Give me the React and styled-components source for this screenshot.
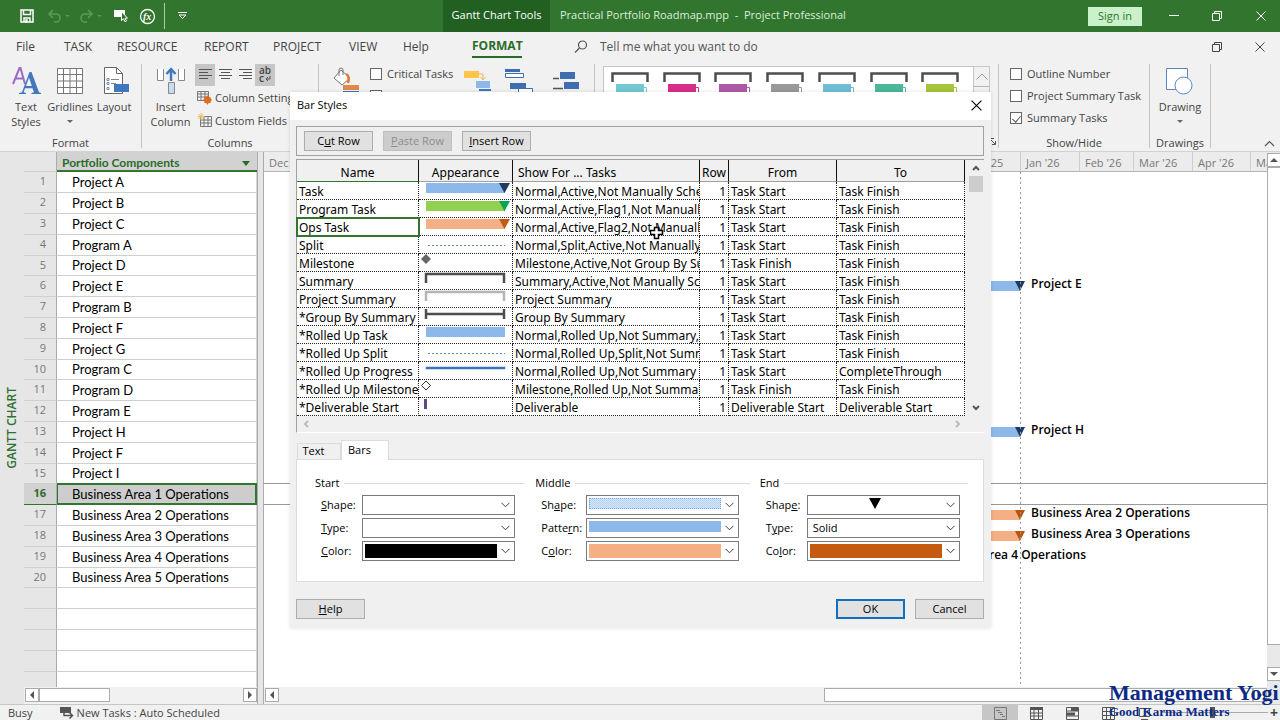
import { useState } from 'react'
import styled, { createGlobalStyle } from 'styled-components'

const UI_FONT = '"Open Sans", "Noto Sans", sans-serif'

const GlobalStyle = createGlobalStyle`
  * {
    box-sizing: border-box;
  }
  body {
    margin: 0;
    font-family: ${UI_FONT};
    font-size: 11px;
    line-height: 16px;
    color: #444;
    background: #f1f1f1;
  }
  button,
  input,
  select {
    font: inherit;
    color: inherit;
    margin: 0;
  }
`

const Page = styled.div`
  position: relative;
  display: flex;
  flex-direction: column;
  height: 100vh;
  overflow: hidden;
`

const Spacer = styled.div`
  flex: 1;
`

const IconButton = styled.button`
  display: flex;
  align-items: center;
  justify-content: center;
  width: ${(props) => props.$width || 34}px;
  height: 28px;
  padding: 0;
  border: 0;
  background: none;
`

/* title bar */
const TitleBar = styled.header`
  display: flex;
  align-items: stretch;
  height: 32px;
  flex: none;
  background: #31752f;
  color: #fff;
`

const QuickAccess = styled.div`
  display: flex;
  align-items: center;
  width: 443px;
  padding-left: 10px;
`

const QuickDivider = styled.div`
  width: 1px;
  height: 26px;
  margin-left: 4px;
  background: #a9cfa8;
`

const ContextTab = styled.div`
  display: flex;
  align-items: center;
  justify-content: center;
  width: 107px;
  height: 32px;
  padding-bottom: 2px;
  background: #226022;
`

const WindowTitle = styled.div`
  display: flex;
  align-items: center;
  padding: 0 0 2px 10px;
  white-space: pre;
  color: #d9f0d8;
`

const SignIn = styled.button`
  align-self: center;
  width: 54px;
  height: 19px;
  margin-right: 14px;
  padding: 0;
  border: 0;
  background: #cbf1cb;
  color: #31752f;
  line-height: 18px;
`

const WindowControls = styled.div`
  display: flex;
  align-items: center;
`

/* menu tabs */
const MenuBar = styled.nav`
  display: flex;
  align-items: center;
  flex: none;
  height: 30px;
  padding-left: 16px;
  font-size: 12px;
`

const MenuTab = styled.a`
  flex: none;
  width: ${(props) => props.$width}px;
  color: #444;
  text-decoration: none;
  white-space: nowrap;
`

const ActiveTab = styled(MenuTab)`
  height: 20px;
  margin: 2px 52px 0 0;
  border-bottom: 2px solid #2b6b29;
  color: #2b6b29;
  font-weight: 700;
  text-align: center;
`

const Tell = styled.label`
  display: flex;
  align-items: center;
  gap: 12px;
  width: 300px;
`

const TellInput = styled.input`
  flex: 1;
  border: 0;
  padding: 0;
  background: none;
  outline: none;
  &::placeholder {
    color: #555;
    opacity: 1;
  }
`

/* ribbon */
const Ribbon = styled.div`
  display: flex;
  flex: none;
  height: 90px;
  padding: 2px 0 3px;
  border-bottom: 1px solid #d2d2d2;
`

const Group = styled.section`
  display: flex;
  flex-direction: column;
  flex: none;
  width: ${(props) => props.$width}px;
  border-right: 1px solid #c3c3c3;
`

const GroupBody = styled.div`
  display: flex;
  align-items: flex-start;
  flex: 1;
  min-height: 0;
  padding-left: ${(props) => props.$pad || 0}px;
`

const GroupLabel = styled.div`
  text-align: center;
  height: 10px;
  line-height: 10px;
`

const Launcher = styled.div`
  display: flex;
  justify-content: flex-end;
  height: 10px;
  padding-right: 2px;
`

const BigButton = styled.button`
  display: flex;
  flex-direction: column;
  align-items: center;
  flex: none;
  width: ${(props) => props.$width || 44}px;
  padding: 1px 0 0;
  border: 0;
  background: none;
  line-height: 15px;
  white-space: nowrap;
`

const BigIcon = styled.svg`
  display: block;
  width: 32px;
  height: 32px;
  margin-bottom: 2px;
`

const Caret = styled.span`
  width: 0;
  height: 0;
  margin-top: 6px;
  border: 3px solid transparent;
  border-top-color: #666;
  border-bottom: 0;
`

const ColumnTools = styled.div`
  display: flex;
  flex-direction: column;
`

const AlignRow = styled.div`
  display: flex;
  height: 22px;
`

const AlignButton = styled.button`
  display: flex;
  align-items: center;
  justify-content: center;
  width: ${(props) => props.$width || 20}px;
  height: 22px;
  padding: 0;
  border: 0;
  background: ${(props) => (props.$on ? '#c6c6c6' : 'none')};
`

const SmallButton = styled.button`
  display: flex;
  align-items: center;
  gap: 3px;
  height: 23px;
  padding: 0 2px;
  border: 0;
  background: none;
  white-space: nowrap;
`

const CheckList = styled.div`
  display: flex;
  flex-direction: column;
  gap: 6px;
  padding-top: 2px;
`

const CheckLabel = styled.label`
  display: flex;
  align-items: center;
  gap: 5px;
  height: 16px;
  white-space: nowrap;
`

const CheckInput = styled.input`
  appearance: none;
  display: grid;
  place-content: center;
  width: 12px;
  height: 12px;
  border: 1px solid #666;
  background: #fff;
  &:checked::before {
    content: '';
    width: 4px;
    height: 7px;
    border: solid #555;
    border-width: 0 1px 1px 0;
    transform: rotate(40deg);
  }
`

const Gallery = styled.div`
  display: flex;
  width: 387px;
  height: 62px;
  margin: 2px 0 0 8px;
  border: 1px solid #c6c6c6;
  background: #fff;
`

const GalleryItems = styled.div`
  display: flex;
  flex: 1;
  padding-left: 7px;
`

const GalleryItem = styled.button`
  display: flex;
  align-items: flex-start;
  flex: 1;
  padding: 5px 0 0;
  border: 0;
  background: none;
`

const GalleryScroll = styled.div`
  width: 16px;
  border-left: 1px solid #c6c6c6;
  background: #f1f1f1;
`

const GalleryArrow = styled.button`
  display: flex;
  align-items: center;
  justify-content: center;
  width: 100%;
  height: 20px;
  padding: 0;
  border: 0;
  border-bottom: 1px solid #b5b5b5;
  background: none;
`

const RibbonEnd = styled.div`
  display: flex;
  flex: 1;
  align-items: flex-end;
  justify-content: flex-end;
  padding-right: 5px;
`

/* main area */
const Main = styled.main`
  display: flex;
  flex: 1;
  min-height: 0;
  background: #fff;
`

const ViewStrip = styled.div`
  display: flex;
  align-items: center;
  justify-content: center;
  width: 24px;
  flex: none;
  background: #e6e6e6;
`

const ViewName = styled.span`
  writing-mode: vertical-rl;
  transform: rotate(180deg);
  color: #2f7030;
  font-weight: 600;
  font-size: 12px;
`

const SheetPane = styled.div`
  display: flex;
  flex-direction: column;
  flex: none;
  width: 234px;
  border-right: 1px solid #ababab;
`

const SheetScroll = styled.div`
  flex: 1;
  min-height: 0;
  overflow: hidden;
`

const Sheet = styled.table`
  width: 100%;
  border-collapse: separate;
  border-spacing: 0;
  table-layout: fixed;
  font-family: Lato, sans-serif;
  font-size: 13px;
  color: #000;
`

const SheetCorner = styled.th`
  width: 33px;
  height: 20px;
  padding: 0;
  background: #e6e6e6;
  border-right: 1px solid #ababab;
  border-bottom: 1px solid #cfcfcf;
`

const SheetHeading = styled.th`
  padding: 0 7px 0 5px;
  border-bottom: 2px solid #31752f;
  background: #d2d2d2;
  color: #2b6b29;
  font-size: 12px;
  text-align: left;
`

const HeadingRow = styled.div`
  display: flex;
  align-items: center;
  justify-content: space-between;
  padding-top: 4px;
  line-height: 14px;
`

const FilterArrow = styled.span`
  border: 4px solid transparent;
  border-top: 5px solid #2b6b29;
  border-bottom: 0;
`

const SheetRow = styled.tr`
  height: 21px;
  &:nth-child(5n) {
    height: 20px;
  }
`

const RowNumber = styled.th`
  padding: 0 10px 2px 0;
  border-right: 1px solid #ababab;
  border-bottom: 1px solid ${(props) => (props.$on ? '#31752f' : '#d0d0d0')};
  background: ${(props) => (props.$on ? '#d2d2d2' : '#e6e6e6')};
  color: ${(props) => (props.$on ? '#2b6b29' : '#777')};
  font-family: ${UI_FONT};
  font-size: 11px;
  font-weight: ${(props) => (props.$on ? 700 : 400)};
  line-height: 14px;
  text-align: right;
`

const TaskName = styled.td`
  padding: 0 0 1px 15px;
  border-bottom: 1px solid ${(props) => (props.$on ? '#31752f' : '#cfcfcf')};
  border-right: 1px solid ${(props) => (props.$on ? '#31752f' : '#d6d6d6')};
  background: ${(props) => (props.$on ? '#cdcdcd' : '#fff')};
  box-shadow: ${(props) => (props.$on ? '0 -1px 0 #31752f, inset 0 0 0 1px #31752f' : 'none')};
  line-height: 16px;
  white-space: nowrap;
`

const HScroll = styled.div`
  display: flex;
  align-items: flex-start;
  flex: none;
  height: 17px;
  padding: 1px 0 0 1px;
  background: #f1f1f1;
`

const ScrollArrow = styled.button`
  display: flex;
  align-items: center;
  justify-content: center;
  flex: none;
  width: 14px;
  height: 14px;
  padding: 0;
  border: 1px solid #ababab;
  background: #fff;
`

const ScrollThumb = styled.div`
  width: ${(props) => props.$width}px;
  height: 14px;
  border: 1px solid #ababab;
  background: #fff;
`

const Splitter = styled.div`
  flex: none;
  width: 6px;
  background: #e6e6e6;
  border-right: 1px solid #ababab;
`

const ChartPane = styled.div`
  display: flex;
  flex-direction: column;
  flex: 1;
  min-width: 0;
`

const Timescale = styled.div`
  display: flex;
  flex: none;
  height: 20px;
  overflow: hidden;
  border-bottom: 1px solid #b5b5b5;
  background: #ececec;
  color: #777;
`

const Month = styled.div`
  flex: none;
  width: ${(props) => props.$width}px;
  height: 19px;
  padding: 3px 0 0 5px;
  border-right: 1px solid #cfcfcf;
  white-space: nowrap;
`

const ChartArea = styled.div`
  position: relative;
  flex: 1;
  min-height: 0;
  overflow: hidden;
`

const TodayLine = styled.div`
  position: absolute;
  top: 0;
  bottom: 0;
  left: 756px;
  width: 1px;
  background: repeating-linear-gradient(#999 0 2px, transparent 2px 5px);
`

const ChartRow = styled.div`
  display: flex;
  align-items: center;
  height: 21px;
  padding-bottom: 4px;
  border-bottom: 1px solid ${(props) => (props.$on ? '#999' : 'transparent')};
  box-shadow: ${(props) => (props.$on ? '0 -1px 0 #999' : 'none')};
  color: #000;
  font-size: 12px;
  font-weight: 600;
  white-space: nowrap;
  &:nth-child(5n) {
    height: 20px;
  }
`

const GanttBar = styled.div`
  width: 100px;
  height: 10px;
  margin-top: 4px;
  background: ${(props) => props.color};
`

const GanttEnd = styled.svg`
  width: 10px;
  height: 10px;
  margin: 4px 6px 0 -5px;
`

const VScroll = styled.div`
  display: flex;
  flex-direction: column;
  flex: none;
  width: 13px;
  padding: 1px 0 23px;
  background: #e9e9e9;
`

const VThumb = styled.div`
  flex: 1;
  margin-bottom: 22px;
  border: 1px solid #ababab;
  border-right: 0;
  background: #fff;
`

/* status bar */
const StatusBar = styled.footer`
  display: flex;
  align-items: center;
  flex: none;
  height: 16px;
  padding-left: 8px;
  border-top: 1px solid #c6c6c6;
`

const StatusMode = styled.div`
  display: flex;
  align-items: center;
  gap: 3px;
  margin-left: 27px;
`

const ViewButton = styled.button`
  display: flex;
  align-items: center;
  justify-content: center;
  width: 36px;
  height: 15px;
  padding: 2px 0 0;
  border: 0;
  background: ${(props) => (props.$on ? '#c6c6c6' : 'none')};
`

const ZoomSlider = styled.input`
  appearance: none;
  width: 106px;
  height: 12px;
  background: linear-gradient(#aaa, #aaa) center / 100% 1px no-repeat;
  &::-webkit-slider-thumb {
    appearance: none;
    width: 5px;
    height: 11px;
    background: #555;
  }
`

const ZoomSign = styled.button`
  width: 12px;
  padding: 0;
  border: 0;
  background: none;
  font-size: 14px;
  line-height: 14px;
  font-weight: 700;
`

const Watermark = styled.div`
  position: absolute;
  right: 0;
  bottom: 0;
  z-index: 3;
  width: 171px;
  color: #0b2a86;
  font-family: 'Liberation Serif', serif;
  font-weight: 700;
  white-space: nowrap;
`

const WatermarkName = styled.div`
  font-size: 22px;
  line-height: 22px;
`

const WatermarkLine = styled.div`
  font-size: 13px;
  line-height: 16px;
`

/* dialog */
const DialogLayer = styled.div`
  position: absolute;
  inset: 0;
  z-index: 2;
  display: flex;
  align-items: flex-start;
  justify-content: center;
  padding: 92px 0 0 1px;
`

const Dialog = styled.div`
  position: relative;
  width: 701px;
  background: #f0f0f0;
  box-shadow: 0 0 4px rgba(0, 0, 0, 0.12);
  color: #000;
`

const DialogTitle = styled.div`
  display: flex;
  align-items: center;
  justify-content: space-between;
  height: 28px;
  padding: 0 0 2px 7px;
  background: #fff;
`

const DialogBody = styled.div`
  padding: 6px 7px 9px 6px;
`

const RowTools = styled.div`
  display: flex;
  align-items: center;
  gap: 10px;
  height: 30px;
  padding-left: 7px;
  border: 1px solid #a0a0a0;
`

const DialogButton = styled.button`
  width: 69px;
  height: 20px;
  padding: 0;
  border: ${(props) => (props.$primary ? '2px solid #0f6fbd' : '1px solid #adadad')};
  background: #e1e1e1;
  line-height: 16px;
  white-space: nowrap;
  &:disabled {
    border-color: #bfbfbf;
    background: #ccc;
    color: #8c8c8c;
  }
`

const StylesFrame = styled.div`
  display: grid;
  grid-template-columns: 1fr 19px;
  margin-top: 3px;
  border-top: 1px solid #a0a0a0;
  border-left: 1px solid #a0a0a0;
  border-bottom: 1px solid #fff;
`

const StylesTable = styled.table`
  width: 668px;
  border-collapse: separate;
  border-spacing: 0;
  table-layout: fixed;
  background: #fff;
  font-family: 'Noto Sans', sans-serif;
  font-size: 12px;
`

const StylesHead = styled.th`
  width: ${(props) => props.$width}px;
  height: 22px;
  padding: 5px 0 0;
  border-right: 1px solid #111;
  border-bottom: 1px solid ${(props) => (props.$on ? '#31752f' : '#a0a0a0')};
  background: #f0f0f0;
  font-weight: 400;
  line-height: 16px;
  text-align: ${(props) => props.$align || 'center'};
  text-indent: ${(props) => (props.$align ? 5 : 0)}px;
  white-space: nowrap;
`

const StylesCell = styled.td`
  height: 18px;
  padding: 2px 0 0 2px;
  overflow: hidden;
  border-right: 1px dotted #222;
  border-bottom: 1px dotted #222;
  outline: ${(props) => (props.$on ? '2px solid #31752f' : 'none')};
  outline-offset: -1px;
  line-height: 15px;
  white-space: nowrap;
`

const RowCell = styled(StylesCell)`
  padding-right: 2px;
  text-align: right;
`

const AppearanceCell = styled(StylesCell)`
  padding: 0;
`

const Drawing = styled.svg`
  display: block;
`

const DialogVScroll = styled.div`
  display: flex;
  flex-direction: column;
  justify-content: space-between;
  align-items: center;
  padding-left: 2px;
`

const DialogVThumb = styled.div`
  width: 14px;
  height: 16px;
  background: #cdcdcd;
`

const DialogHScroll = styled.div`
  display: flex;
  align-items: center;
  justify-content: space-between;
  height: 16px;
  padding: 0 0 0 2px;
`

const PlainArrow = styled.button`
  display: flex;
  align-items: center;
  justify-content: center;
  width: 14px;
  height: 16px;
  padding: 0;
  border: 0;
  background: none;
`

const TabList = styled.div`
  display: flex;
  align-items: flex-end;
  margin-top: 7px;
  height: 19px;
  padding-left: 1px;
`

const DialogTab = styled.button`
  width: ${(props) => (props.$on ? 48 : 44)}px;
  height: ${(props) => (props.$on ? 20 : 16)}px;
  margin-bottom: ${(props) => (props.$on ? -1 : 0)}px;
  padding: 0 15px 2px 4px;
  border: 1px solid #dcdcdc;
  border-bottom: 0;
  background: ${(props) => (props.$on ? '#fff' : '#f0f0f0')};
  line-height: 14px;
`

const TabPanel = styled.div`
  display: grid;
  grid-template-columns: 210fr 214fr 208fr;
  gap: 10px;
  height: 123px;
  padding: 15px 15px 0 18px;
  border: 1px solid #dcdcdc;
  background: #fff;
`

const BarPart = styled.fieldset`
  min-width: 0;
  margin: 0;
  padding: 0;
  border: 0;
`

const PartTitle = styled.div`
  display: flex;
  align-items: center;
  gap: 5px;
  height: 16px;
  margin-bottom: 4px;
  &::after {
    content: '';
    flex: 1;
    height: 1px;
    background: #dcdcdc;
  }
`

const Field = styled.div`
  display: grid;
  grid-template-columns: ${(props) => props.$label}px 153px;
  align-items: center;
  height: 20px;
  margin-bottom: 3px;
  padding-left: 6px;
`

const Combo = styled.div`
  display: grid;
  height: 20px;
  border: 1px solid #7a7a7a;
  background: #fff;
  & > * {
    grid-area: 1 / 1;
  }
`

const ComboSelect = styled.select`
  appearance: none;
  width: 100%;
  height: 18px;
  padding: 0 5px;
  border: 0;
  background: none;
  line-height: 16px;
`

const Swatch = styled.div`
  width: 132px;
  height: ${(props) => (props.$thin ? 11 : 14)}px;
  margin: 2px;
  background: ${(props) => props.color};
`

const DottedSwatch = styled(Swatch)`
  border: 1px dotted #6fa3dc;
  background: repeating-conic-gradient(#b4d3f5 0 25%, #d3e6fa 0 50%) 0 0 / 2px 2px;
`

const ComboArrow = styled.svg`
  justify-self: end;
  align-self: center;
  width: 9px;
  height: 6px;
  margin-right: 4px;
  pointer-events: none;
`

const ShapeMark = styled.svg`
  justify-self: center;
  width: 12px;
  height: 12px;
  margin: 1px 16px 0 0;
`

const DialogFooter = styled.div`
  display: flex;
  gap: 10px;
  margin-top: 17px;
`

const CellCursor = styled.svg`
  position: absolute;
  left: 360px;
  top: 134px;
  width: 14px;
  height: 14px;
`

const TASKS = [
  'Project A',
  'Project B',
  'Project C',
  'Program A',
  'Project D',
  'Project E',
  'Program B',
  'Project F',
  'Project G',
  'Program C',
  'Program D',
  'Program E',
  'Project H',
  'Project F',
  'Project I',
  'Business Area 1 Operations',
  'Business Area 2 Operations',
  'Business Area 3 Operations',
  'Business Area 4 Operations',
  'Business Area 5 Operations',
]

const SHEET_ROWS = Array.from({ length: 25 }, (_, i) => TASKS[i] || '')
const SELECTED = 16

// bar end, in pixels from the left edge of the chart
const BARS = {
  6: { end: 756, color: '#8cb9ea', mark: '#1f3864' },
  13: { end: 756, color: '#8cb9ea', mark: '#1f3864' },
  17: { end: 756, color: '#f4b084', mark: '#b85410' },
  18: { end: 756, color: '#f4b084', mark: '#b85410' },
  19: { end: 652, color: '#f4b084', mark: '#b85410' },
}

const MONTHS = [
  ["Dec '24", 58],
  ["Jan '25", 59],
  ["Feb '25", 54],
  ["Mar '25", 59],
  ["Apr '25", 58],
  ["May '25", 59],
  ["Jun '25", 58],
  ["Jul '25", 59],
  ["Aug '25", 59],
  ["Sep '25", 58],
  ["Oct '25", 59],
  ["Nov '25", 57],
  ["Dec '25", 60],
  ["Jan '26", 59],
  ["Feb '26", 54],
  ["Mar '26", 59],
  ["Apr '26", 58],
  ["May '26", 59],
]

const STYLES = [
  ['Task', 'task', 'Normal,Active,Not Manually Sche', 'Task Start', 'Task Finish'],
  ['Program Task', 'program', 'Normal,Active,Flag1,Not Manually', 'Task Start', 'Task Finish'],
  ['Ops Task', 'ops', 'Normal,Active,Flag2,Not Manually', 'Task Start', 'Task Finish'],
  ['Split', 'split', 'Normal,Split,Active,Not Manually', 'Task Start', 'Task Finish'],
  ['Milestone', 'milestone', 'Milestone,Active,Not Group By Su', 'Task Finish', 'Task Finish'],
  ['Summary', 'summary', 'Summary,Active,Not Manually Sch', 'Task Start', 'Task Finish'],
  ['Project Summary', 'project', 'Project Summary', 'Task Start', 'Task Finish'],
  ['*Group By Summary', 'group', 'Group By Summary', 'Task Start', 'Task Finish'],
  ['*Rolled Up Task', 'rolled', 'Normal,Rolled Up,Not Summary,N', 'Task Start', 'Task Finish'],
  ['*Rolled Up Split', 'split', 'Normal,Rolled Up,Split,Not Summ', 'Task Start', 'Task Finish'],
  ['*Rolled Up Progress', 'progress', 'Normal,Rolled Up,Not Summary', 'Task Start', 'CompleteThrough'],
  ['*Rolled Up Milestone', 'diamond', 'Milestone,Rolled Up,Not Summar', 'Task Finish', 'Task Finish'],
  ['*Deliverable Start', 'deliverable', 'Deliverable', 'Deliverable Start', 'Deliverable Start'],
]

const GALLERY = ['#74c8d2', '#d62e8a', '#ad5aa6', '#999', '#6fbdd3', '#4cb79a', '#a5c63b']

const bar = (fill, end) => (
  <>
    <rect x='7' y='2' width='79' height='10' fill={fill} />
    {end && <path d='M80 2h11l-5.5 10z' fill={end} />}
  </>
)

const DRAWINGS = {
  task: bar('#8cb9ea', '#1f3864'),
  program: bar('#92d050', '#00a651'),
  ops: bar('#f4b084', '#c55a11'),
  rolled: bar('#8cb9ea'),
  split: <path d='M9 10.5h77' stroke='#5b8fc9' strokeDasharray='2 2' />,
  milestone: <path d='M7 1l5 5-5 5-5-5z' fill='#666' />,
  summary: <path d='M7 12V3h78v9' fill='none' stroke='#4d4d4d' strokeWidth='2.5' />,
  project: <path d='M7 12V3h78v9' fill='none' stroke='#b5b5b5' strokeWidth='2.5' />,
  group: <path d='M7 2v10M85 2v10M7 7h78' fill='none' stroke='#4d4d4d' strokeWidth='2.5' />,
  progress: <rect x='7' y='6' width='79' height='2' fill='#3a76bf' stroke='#3a76bf' strokeWidth='.5' />,
  diamond: <path d='M7 2l4.500 4.500-4.500 4.500-4.500-4.500z' fill='#fff' stroke='#333' />,
  deliverable: <rect x='5' y='2' width='3' height='10' fill='#604a7b' />,
}

const Arrow = ({ dir }) => (
  <svg width='8' height='8' viewBox='0 0 8 8' fill='#555'>
    {dir === 'left' && <path d='M6 0v8L2 4z' />}
    {dir === 'right' && <path d='M2 0v8l4-4z' />}
    {dir === 'up' && <path d='M0 6h8L4 2z' />}
    {dir === 'down' && <path d='M0 2h8L4 6z' />}
  </svg>
)

const Chevron = ({ d, color = '#555', width = 2 }) => (
  <svg width='8' height='8' viewBox='0 0 8 8' fill='none' stroke={color} strokeWidth={width}>
    <path d={d} />
  </svg>
)

const RestoreIcon = () => (
  <svg width='12' height='12' viewBox='0 0 12 12' fill='none' stroke='currentColor'>
    <path d='M1.500 3.500h7v7h-7zM3.500 3.500v-2h7v7h-2' />
  </svg>
)

const CloseIcon = ({ size = 10 }) => (
  <svg width={size} height={size} viewBox='0 0 10 10' fill='none' stroke='currentColor'>
    <path d='M.5.5l9 9M9.500.5l-9 9' />
  </svg>
)

const AlignIcon = ({ kind }) => {
  const x = { left: 0, center: 2, right: 4 }[kind]
  return (
    <svg width='13' height='12' viewBox='0 0 13 12' stroke='#555' fill='none'>
      <path d={`M0 .5h13M${x} 3.500h9M0 6.500h13M${x} 9.500h9`} />
    </svg>
  )
}

const Check = ({ label, on }) => {
  const [checked, setChecked] = useState(!!on)
  return (
    <CheckLabel>
      <CheckInput type='checkbox' checked={checked} onChange={() => setChecked(!checked)} />
      {label}
    </CheckLabel>
  )
}

// label text is split round its access key
const FormField = ({ id, width, before, accessKey, after, value, children }) => (
  <Field $label={width}>
    <label htmlFor={id}>
      {before}
      <u>{accessKey}</u>
      {after}
    </label>
    <Combo>
      {children}
      <ComboSelect id={id} defaultValue={value || ''}>
        <option value={value || ''}>{value || ''}</option>
      </ComboSelect>
      <ComboArrow viewBox='0 0 9 6' fill='none' stroke='#444'>
        <path d='M.5.8l4 4 4-4' />
      </ComboArrow>
    </Combo>
  </Field>
)

const TopBar = () => (
  <TitleBar>
    <QuickAccess>
      <IconButton aria-label='Save'>
        <svg width='14' height='14' viewBox='0 0 14 14' fill='none' stroke='#fff' strokeWidth='1.500'>
          <path d='M1 1h12v12H1zM3.500 1v4.500h7V1M4 13V9h6v4' />
          <path d='M6 11h1v2H6z' />
        </svg>
      </IconButton>
      <IconButton aria-label='Undo' $width={30}>
        <svg width='24' height='14' viewBox='0 0 24 14' fill='none' stroke='#5b9a59' strokeWidth='1.600'>
          <path d='M6 1L2 5l4 4M2 5h7a4 4 0 0 1 0 8H7' />
          <path d='M18 6h5l-2.500 2z' fill='#5b9a59' stroke='none' />
        </svg>
      </IconButton>
      <IconButton aria-label='Redo'>
        <svg width='24' height='14' viewBox='0 0 24 14' fill='none' stroke='#5b9a59' strokeWidth='1.600'>
          <path d='M9 1l4 4-4 4M13 5H6a4 4 0 0 0 0 8h2' />
          <path d='M18 6h5l-2.500 2z' fill='#5b9a59' stroke='none' />
        </svg>
      </IconButton>
      <IconButton aria-label='Select objects' $width={26}>
        <svg width='16' height='14' viewBox='0 0 16 14'>
          <path d='M1 1h11v7H1z' fill='#fff' />
          <path d='M8.500 2.500v9l2-1.700 1.500 3 1.500-.8-1.500-2.800h2.500z' fill='#31752f' stroke='#fff' />
        </svg>
      </IconButton>
      <IconButton aria-label='Formula' $width={26}>
        <svg width='17' height='17' viewBox='0 0 17 17'>
          <circle cx='8.500' cy='8.500' r='7' fill='none' stroke='#fff' strokeWidth='1.300' />
          <text x='4' y='12' fill='#fff' fontSize='10' fontStyle='italic' fontWeight='700' fontFamily='Liberation Serif'>
            fx
          </text>
        </svg>
      </IconButton>
      <QuickDivider />
      <IconButton aria-label='Customize toolbar'>
        <svg width='9' height='8' viewBox='0 0 9 8' fill='none' stroke='#fff'>
          <path d='M0 .5h9M1 3l3.500 3.500L8 3z' />
        </svg>
      </IconButton>
    </QuickAccess>
    <ContextTab>Gantt Chart Tools</ContextTab>
    <WindowTitle>Practical Portfolio Roadmap.mpp  -  Project Professional</WindowTitle>
    <Spacer />
    <SignIn>Sign in</SignIn>
    <WindowControls>
      <IconButton aria-label='Minimize' $width={36}>
        <svg width='10' height='2' viewBox='0 0 10 2' fill='#fff'>
          <path d='M0 0h10v1H0z' />
        </svg>
      </IconButton>
      <IconButton aria-label='Restore' $width={50}>
        <RestoreIcon />
      </IconButton>
      <IconButton aria-label='Close' $width={38}>
        <CloseIcon />
      </IconButton>
    </WindowControls>
  </TitleBar>
)

const Menu = () => (
  <MenuBar>
    <MenuTab href='#file' $width={48}>File</MenuTab>
    <MenuTab href='#task' $width={53}>TASK</MenuTab>
    <MenuTab href='#resource' $width={87}>RESOURCE</MenuTab>
    <MenuTab href='#report' $width={69}>REPORT</MenuTab>
    <MenuTab href='#project' $width={76}>PROJECT</MenuTab>
    <MenuTab href='#view' $width={54}>VIEW</MenuTab>
    <MenuTab href='#help' $width={69}>Help</MenuTab>
    <ActiveTab href='#format' $width={50}>FORMAT</ActiveTab>
    <Tell>
      <svg width='14' height='14' viewBox='0 0 14 14' fill='none' stroke='#555' strokeWidth='1.200'>
        <circle cx='8.500' cy='5' r='4' />
        <path d='M5.500 8L1 12.500' />
      </svg>
      <TellInput aria-label='Tell me' placeholder='Tell me what you want to do' />
    </Tell>
    <Spacer />
    <IconButton aria-label='Restore window' $width={44}>
      <RestoreIcon />
    </IconButton>
    <IconButton aria-label='Close window' $width={41}>
      <CloseIcon />
    </IconButton>
  </MenuBar>
)

const RibbonBar = () => (
  <Ribbon>
    <Group $width={142}>
      <GroupBody $pad={4}>
        <BigButton $width={44}>
          <BigIcon viewBox='0 0 32 32'>
            <path d='M3 19L9.500 3h1L15 19M5 13.500h8' fill='none' stroke='#9b6bc4' strokeWidth='2' />
            <path
              d='M9 29h7v-1l-2.300-.7 1.300-4h7.500l1.500 4-2.500.7v1H31v-1l-2-.8L21.500 7h-2L12 27.200 9 28zM16 21l3-8.500 2.800 8.500z'
              fill='#3f78bd'
            />
          </BigIcon>
          Text
          <br />
          Styles
        </BigButton>
        <BigButton $width={44}>
          <BigIcon viewBox='0 0 32 32'>
            <path
              d='M3.500 3.500h25v25h-25zM9.500 3v26M16 3v26M22.500 3v26M3 9.500h26M3 16h26M3 22.500h26'
              fill='#fff'
              stroke='#777'
            />
          </BigIcon>
          Gridlines
          <Caret />
        </BigButton>
        <BigButton $width={44}>
          <BigIcon viewBox='0 0 32 32'>
            <path d='M6.500 2.500h12l6 6v20h-18z' fill='#fff' stroke='#666' />
            <path d='M18.500 2.500v6h6' fill='none' stroke='#666' />
            <path d='M13 14.500h8M13 18.500h5' stroke='#888' />
            <path d='M9 13.500h2v2H9zM9 17.500h2v2H9zM9 22.500h2v2H9z' fill='none' stroke='#6f8fb5' />
            <path d='M16 19h15v8H16z' fill='#3f78bd' />
          </BigIcon>
          Layout
        </BigButton>
      </GroupBody>
      <GroupLabel>Format</GroupLabel>
    </Group>
    <Group $width={177}>
      <GroupBody $pad={4}>
        <BigButton $width={49}>
          <BigIcon viewBox='0 0 32 32'>
            <path d='M2.500 4v11.500h6V4M23.500 4v11.500h6V4' fill='#fff' stroke='#888' />
            <path d='M16 16V4M11.500 9L16 4l4.500 5' fill='none' stroke='#3f78bd' strokeWidth='2.500' />
            <path d='M13.500 17.500h6v11h-6z' fill='#c9dcf0' stroke='#888' />
          </BigIcon>
          Insert
          <br />
          Column
        </BigButton>
        <ColumnTools>
          <AlignRow>
            <AlignButton $on aria-label='Align left'><AlignIcon kind='left' /></AlignButton>
            <AlignButton aria-label='Center'><AlignIcon kind='center' /></AlignButton>
            <AlignButton aria-label='Align right'><AlignIcon kind='right' /></AlignButton>
            <AlignButton $on aria-label='Wrap text'>
              <svg width='16' height='20' viewBox='0 0 16 20'>
                <text x='2' y='9' fontSize='10' fontWeight='600' fill='#444'>ab</text>
                <text x='2' y='17' fontSize='10' fontWeight='600' fill='#444'>c</text>
                <path d='M13 11v3H9M11 12l-2 2 2 2' fill='none' stroke='#555' />
              </svg>
            </AlignButton>
          </AlignRow>
          <SmallButton>
            <svg width='15' height='15' viewBox='0 0 15 15' fill='none'>
              <path d='M.5 1.500h11v9H.5zM.5 4h11M4 1.500v9M8 1.500v9M.5 7h11' stroke='#777' />
              <circle cx='10.500' cy='10' r='2.500' stroke='#e2681d' strokeWidth='2' />
              <path d='M10.500 5.500v9M6 10h9M7.500 7l6 6M13.500 7l-6 6' stroke='#e2681d' />
            </svg>
            Column Settings
          </SmallButton>
          <SmallButton>
            <svg width='15' height='15' viewBox='0 0 15 15' fill='none'>
              <path d='M3.500 3.500h11v10h-11zM3.500 7h11M3.500 10h11M7 3.500v10M11 3.500v10' stroke='#777' />
              <path d='M4 0v7M.5 3.500h7M1.500 1l5 5M6.500 1l-5 5' stroke='#f0c05a' />
            </svg>
            Custom Fields
          </SmallButton>
        </ColumnTools>
      </GroupBody>
      <GroupLabel>Columns</GroupLabel>
    </Group>
    <Group $width={276}>
      <GroupBody $pad={0}>
        <BigButton $width={51}>
          <BigIcon viewBox='0 0 32 32'>
            <path d='M5 13l7-8 9 8-8 7z' fill='#fff' stroke='#777' />
            <path d='M10 11V5a2 2 0 0 1 4 0v5' fill='none' stroke='#777' />
            <path d='M17 9q4 2 2 9' fill='none' stroke='#e07b3c' strokeWidth='2.5' />
            <path d='M14 20h16v5H14z' fill='#e0884d' />
            <path d='M14 26h16v5H14z' fill='#3f78bd' />
          </BigIcon>
          Format
        </BigButton>
        <CheckList>
          <Check label='Critical Tasks' />
          <Check label='Slack' />
          <Check label='Late Tasks' />
        </CheckList>
        <BigButton $width={48}>
          <BigIcon viewBox='0 0 32 32'>
            <path d='M3 6h15v7H3z' fill='#fdc64b' />
            <path d='M18 9h4v5M19.500 12l2.500 3 2.500-3' fill='none' stroke='#e9b955' />
            <path d='M15 16h14v7H15z' fill='#8cb9ea' />
            <path d='M18 25h12' stroke='#3f78bd' strokeWidth='2' />
          </BigIcon>
          Task Path
        </BigButton>
        <BigButton $width={36}>
          <BigIcon viewBox='0 0 32 32'>
            <path d='M2 4h15v3H2zM7 18h16v6H7z' fill='#3f6eb0' />
            <path d='M2.500 8.500h18v4h-18zM15.500 23.500h14v5h-14z' fill='#fff' stroke='#3f6eb0' />
          </BigIcon>
          Baseline
        </BigButton>
        <BigButton $width={56}>
          <BigIcon viewBox='0 0 32 32'>
            <path d='M11 7h15v7H11zM15 17h15v7H15z' fill='#3f6eb0' />
            <path d='M4 13.500h6M4 23.500h10' stroke='#555' strokeWidth='1.500' />
          </BigIcon>
          Slippage
        </BigButton>
      </GroupBody>
      <GroupLabel>Bar Styles</GroupLabel>
    </Group>
    <Group $width={404}>
      <GroupBody>
        <Gallery>
          <GalleryItems>
            {GALLERY.map((color) => (
              <GalleryItem key={color} aria-label={`Style ${color}`}>
                <svg width='40' height='26' viewBox='0 0 40 26' fill='none'>
                  <path d='M1.500 10V1.500h35V10' stroke='#4d4d4d' strokeWidth='2.500' />
                  <path d='M5 12h28v9H5z' fill={color} />
                  <path d='M33 15.500h2.500V24' stroke={color} />
                </svg>
              </GalleryItem>
            ))}
          </GalleryItems>
          <GalleryScroll>
            <GalleryArrow aria-label='Previous styles'>
              <svg width='12' height='7' viewBox='0 0 12 7' fill='none' stroke='#999'>
                <path d='M.5 6.500L6 1l5.500 5.500' />
              </svg>
            </GalleryArrow>
            <GalleryArrow aria-label='Next styles' />
          </GalleryScroll>
        </Gallery>
      </GroupBody>
      <Launcher>
        <svg width='7' height='7' viewBox='0 0 7 7' fill='none' stroke='#555'>
          <path d='M.5 5V.5H5M2 2l4 4M6.500 3v3.500H3' />
        </svg>
      </Launcher>
    </Group>
    <Group $width={151}>
      <GroupBody $pad={11}>
        <CheckList>
          <Check label='Outline Number' />
          <Check label='Project Summary Task' />
          <Check label='Summary Tasks' on />
        </CheckList>
      </GroupBody>
      <GroupLabel>Show/Hide</GroupLabel>
    </Group>
    <Group $width={61}>
      <GroupBody>
        <BigButton $width={60}>
          <BigIcon viewBox='0 0 32 32' fill='#fff' stroke='#5b86c4'>
            <path d='M2.500 3.500h21v21h-21z' />
            <circle cx='19.500' cy='20.500' r='8.500' />
          </BigIcon>
          Drawing
          <Caret />
        </BigButton>
      </GroupBody>
      <GroupLabel>Drawings</GroupLabel>
    </Group>
    <RibbonEnd>
      <svg width='11' height='8' viewBox='0 0 11 8' fill='none' stroke='#555' strokeWidth='1.200'>
        <path d='M1 6l4.500-4.500L10 6' />
      </svg>
    </RibbonEnd>
  </Ribbon>
)

const TaskSheet = () => (
  <SheetPane>
    <SheetScroll>
      <Sheet>
        <thead>
          <tr>
            <SheetCorner />
            <SheetHeading>
              <HeadingRow>
                Portfolio Components
                <FilterArrow />
              </HeadingRow>
            </SheetHeading>
          </tr>
        </thead>
        <tbody>
          {SHEET_ROWS.map((name, i) => (
            <SheetRow key={i}>
              <RowNumber scope='row' $on={i + 1 === SELECTED}>
                {name && i + 1}
              </RowNumber>
              <TaskName $on={i + 1 === SELECTED}>{name}</TaskName>
            </SheetRow>
          ))}
        </tbody>
      </Sheet>
    </SheetScroll>
    <HScroll>
      <ScrollArrow aria-label='Scroll left'><Arrow dir='left' /></ScrollArrow>
      <ScrollThumb $width={71} />
      <Spacer />
      <ScrollArrow aria-label='Scroll right'><Arrow dir='right' /></ScrollArrow>
    </HScroll>
  </SheetPane>
)

const Chart = () => (
  <ChartPane>
    <Timescale>
      {MONTHS.map(([name, width]) => (
        <Month key={name} $width={width}>{name}</Month>
      ))}
    </Timescale>
    <ChartArea>
      {SHEET_ROWS.map((name, i) => {
        const task = BARS[i + 1]
        return (
          <ChartRow key={i} $on={i + 1 === SELECTED}>
            {task && (
              <>
                <GanttBar color={task.color} style={{ marginLeft: task.end - 100 }} />
                <GanttEnd viewBox='0 0 10 10'>
                  <path d='M0 0h10L5 10z' fill={task.mark} />
                </GanttEnd>
                {name}
              </>
            )}
          </ChartRow>
        )
      })}
      <TodayLine />
    </ChartArea>
    <HScroll>
      <ScrollArrow aria-label='Scroll chart left'><Arrow dir='left' /></ScrollArrow>
      <Spacer />
      <ScrollThumb $width={429} />
      <ScrollArrow aria-label='Scroll chart right'><Arrow dir='right' /></ScrollArrow>
    </HScroll>
  </ChartPane>
)

const Status = () => (
  <StatusBar>
    Busy
    <StatusMode>
      <svg width='14' height='12' viewBox='0 0 14 12' fill='none'>
        <path d='M0 0h11v6H0z' fill='#555' />
        <path d='M4 5v3.500h8M9.500 5.500l3 3-3 3' stroke='#555' strokeWidth='1.500' />
      </svg>
      New Tasks : Auto Scheduled
    </StatusMode>
    <Spacer />
    <ViewButton $on aria-label='Gantt Chart'>
      <svg width='13' height='13' viewBox='0 0 13 13' fill='none' stroke='#777'>
        <path d='M.5.5h12v12H.5zM2 3.500h4M4 5.500h4M6 7.500h3M8 9.500h3' />
      </svg>
    </ViewButton>
    <ViewButton aria-label='Task Usage'>
      <svg width='13' height='13' viewBox='0 0 13 13' fill='none' stroke='#555'>
        <path d='M0 1.500h13' strokeWidth='3' />
        <path d='M.5.5h12v12H.5zM.5 6h12M.5 9h12M4 3v10M8.500 3v10' />
      </svg>
    </ViewButton>
    <ViewButton aria-label='Team Planner'>
      <svg width='13' height='13' viewBox='0 0 13 13' fill='none' stroke='#555'>
        <path d='M.5.5h12v12H.5zM.5 4h12M.5 9h12' />
        <path d='M5 2.500h7M1 7h8' strokeWidth='3' />
      </svg>
    </ViewButton>
    <ViewButton aria-label='Resource Sheet'>
      <svg width='13' height='13' viewBox='0 0 13 13' fill='none' stroke='#555'>
        <path d='M.5.5h12v12H.5zM.5 4.500h12M.5 8.500h12M4.500.5v12M8.500.5v12' />
      </svg>
    </ViewButton>
    <ViewButton aria-label='Report'>
      <svg width='13' height='13' viewBox='0 0 13 13' fill='none' stroke='#555'>
        <path d='M1.500 1.500h10v8h-10zM3 12.500h7' />
      </svg>
    </ViewButton>
    <ZoomSlider type='range' aria-label='Zoom' defaultValue='48' />
    <ZoomSign aria-label='Zoom in'>+</ZoomSign>
  </StatusBar>
)

const BarStylesDialog = () => {
  const [tab, setTab] = useState('Bars')
  return (
    <DialogLayer>
      <Dialog role='dialog' aria-label='Bar Styles'>
        <DialogTitle>
          Bar Styles
          <IconButton aria-label='Close dialog' $width={29}>
            <CloseIcon size={11} />
          </IconButton>
        </DialogTitle>
        <DialogBody>
          <RowTools>
            <DialogButton>C<u>u</u>t Row</DialogButton>
            <DialogButton disabled><u>P</u>aste Row</DialogButton>
            <DialogButton><u>I</u>nsert Row</DialogButton>
          </RowTools>
          <StylesFrame>
            <StylesTable>
              <thead>
                <tr>
                  <StylesHead $width={122} $on>Name</StylesHead>
                  <StylesHead $width={94}>Appearance</StylesHead>
                  <StylesHead $width={187} $align='left'>Show For ... Tasks</StylesHead>
                  <StylesHead $width={29}>Row</StylesHead>
                  <StylesHead $width={108}>From</StylesHead>
                  <StylesHead>To</StylesHead>
                </tr>
              </thead>
              <tbody>
                {STYLES.map(([name, kind, show, from, to]) => (
                  <tr key={name}>
                    <StylesCell $on={name === 'Ops Task'}>{name}</StylesCell>
                    <AppearanceCell>
                      <Drawing width='93' height='17' viewBox='0 1 93 17'>{DRAWINGS[kind]}</Drawing>
                    </AppearanceCell>
                    <StylesCell>{show}</StylesCell>
                    <RowCell>1</RowCell>
                    <StylesCell>{from}</StylesCell>
                    <StylesCell>{to}</StylesCell>
                  </tr>
                ))}
              </tbody>
            </StylesTable>
            <DialogVScroll>
              <div>
                <PlainArrow aria-label='Scroll up'><Chevron d='M1 6l3-3 3 3' /></PlainArrow>
                <DialogVThumb />
              </div>
              <PlainArrow aria-label='Scroll down'><Chevron d='M1 2l3 3 3-3' /></PlainArrow>
            </DialogVScroll>
            <DialogHScroll>
              <PlainArrow aria-label='Scroll left'><Chevron d='M6 1L3 4l3 3' color='#bbb' /></PlainArrow>
              <PlainArrow aria-label='Scroll right'><Chevron d='M2 1l3 3-3 3' color='#bbb' /></PlainArrow>
            </DialogHScroll>
          </StylesFrame>
          <TabList role='tablist'>
            {['Text', 'Bars'].map((name) => (
              <DialogTab key={name} role='tab' $on={tab === name} onClick={() => setTab(name)}>
                {name}
              </DialogTab>
            ))}
          </TabList>
          <TabPanel>
            <BarPart>
              <PartTitle>Start</PartTitle>
              <FormField id='start-shape' width={41} accessKey='S' after='hape:' />
              <FormField id='start-type' width={41} accessKey='T' after='ype:' />
              <FormField id='start-color' width={41} accessKey='C' after='olor:'>
                <Swatch color='#000' />
              </FormField>
            </BarPart>
            <BarPart>
              <PartTitle>Middle</PartTitle>
              <FormField id='middle-shape' width={45} before='Sh' accessKey='a' after='pe:'>
                <DottedSwatch $thin />
              </FormField>
              <FormField id='middle-pattern' width={45} before='Patte' accessKey='r' after='n:'>
                <Swatch $thin color='#8cb9ea' />
              </FormField>
              <FormField id='middle-color' width={45} before='C' accessKey='o' after='lor:'>
                <Swatch color='#f4b084' />
              </FormField>
            </BarPart>
            <BarPart>
              <PartTitle>End</PartTitle>
              <FormField id='end-shape' width={41} before='Shap' accessKey='e' after=':'>
                <ShapeMark viewBox='0 0 12 12'>
                  <path d='M0 1h12L6 12z' />
                </ShapeMark>
              </FormField>
              <FormField id='end-type' width={41} before='T' accessKey='y' after='pe:' value='Solid' />
              <FormField id='end-color' width={41} before='Co' accessKey='l' after='or:'>
                <Swatch color='#c55a11' />
              </FormField>
            </BarPart>
          </TabPanel>
          <DialogFooter>
            <DialogButton><u>H</u>elp</DialogButton>
            <Spacer />
            <DialogButton $primary>OK</DialogButton>
            <DialogButton>Cancel</DialogButton>
          </DialogFooter>
        </DialogBody>
        <CellCursor viewBox='0 0 14 14'>
          <path d='M4.500 1.500h4v3h4v4h-4v4h-4v-4h-4v-4h4z' fill='#fff' stroke='#000' strokeWidth='1.500' />
        </CellCursor>
      </Dialog>
    </DialogLayer>
  )
}

const App = () => {
  return (
    <Page>
      <GlobalStyle />
      <TopBar />
      <Menu />
      <RibbonBar />
      <Main>
        <ViewStrip>
          <ViewName>GANTT CHART</ViewName>
        </ViewStrip>
        <TaskSheet />
        <Splitter />
        <Chart />
        <VScroll>
          <ScrollArrow aria-label='Scroll up'><Arrow dir='up' /></ScrollArrow>
          <VThumb />
          <ScrollArrow aria-label='Scroll down'><Arrow dir='down' /></ScrollArrow>
        </VScroll>
      </Main>
      <Status />
      <BarStylesDialog />
      <Watermark>
        <WatermarkName>Management Yogi</WatermarkName>
        <WatermarkLine>Good Karma Matters</WatermarkLine>
      </Watermark>
    </Page>
  )
}

export default App
